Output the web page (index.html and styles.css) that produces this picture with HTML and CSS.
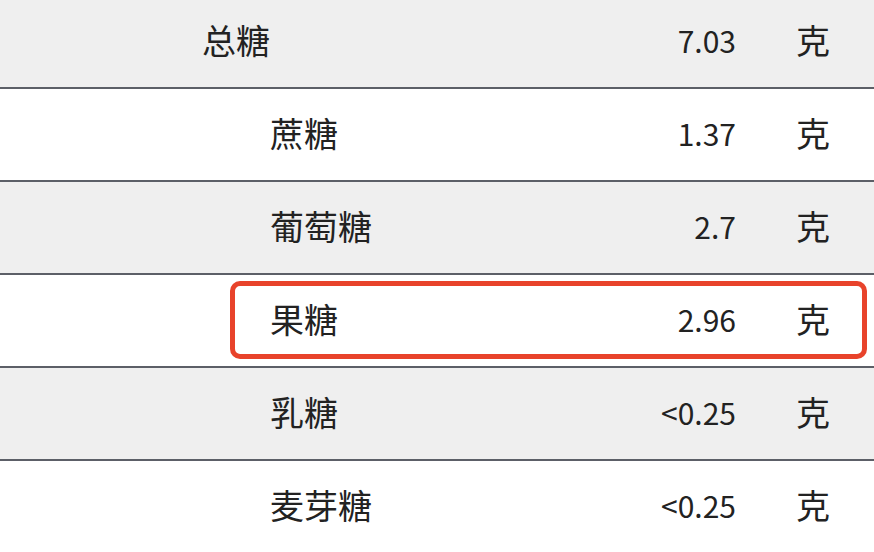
FILE: index.html
```html
<!DOCTYPE html>
<html lang="zh-CN">
<head>
<meta charset="utf-8">
<link rel="stylesheet" href="styles.css">
</head>
<body>
<div class="table">
  <div class="row alt"><div class="name">总糖</div><div class="val">7.03</div><div class="unit">克</div></div>
  <div class="row"><div class="name sub">蔗糖</div><div class="val">1.37</div><div class="unit">克</div></div>
  <div class="row alt"><div class="name sub">葡萄糖</div><div class="val">2.7</div><div class="unit">克</div></div>
  <div class="row hl"><div class="name sub">果糖</div><div class="val">2.96</div><div class="unit">克</div></div>
  <div class="row alt"><div class="name sub">乳糖</div><div class="val">&lt;0.25</div><div class="unit">克</div></div>
  <div class="row"><div class="name sub">麦芽糖</div><div class="val">&lt;0.25</div><div class="unit">克</div></div>
</div>
</body>
</html>
```
FILE: styles.css
```css
html, body {
  margin: 0;
  padding: 0;
  background: #ffffff;
  overflow: hidden;
}
.table {
  margin-top: -4px;
  font-family: "Noto Sans CJK SC", "Noto Sans", sans-serif;
  font-size: 34px;
  color: #222222;
}
.row {
  position: relative;
  display: grid;
  grid-template-columns: 1fr 140px 138px;
  align-items: center;
  box-sizing: border-box;
  height: 93px;
  padding-bottom: 4px;
  border-bottom: 2px solid #5c5f67;
  background: #ffffff;
}
.row.alt {
  background: #efefef;
}
.name {
  padding-left: 202px;
}
.name.sub {
  padding-left: 270px;
}
.val {
  text-align: right;
  font-size: 30px;
}
.unit {
  padding-left: 60px;
}
.row.hl::after {
  content: "";
  position: absolute;
  top: 6px;
  bottom: 7px;
  left: 230px;
  right: 7px;
  border: 5px solid #e8432b;
  border-radius: 10px;
  pointer-events: none;
}
```
